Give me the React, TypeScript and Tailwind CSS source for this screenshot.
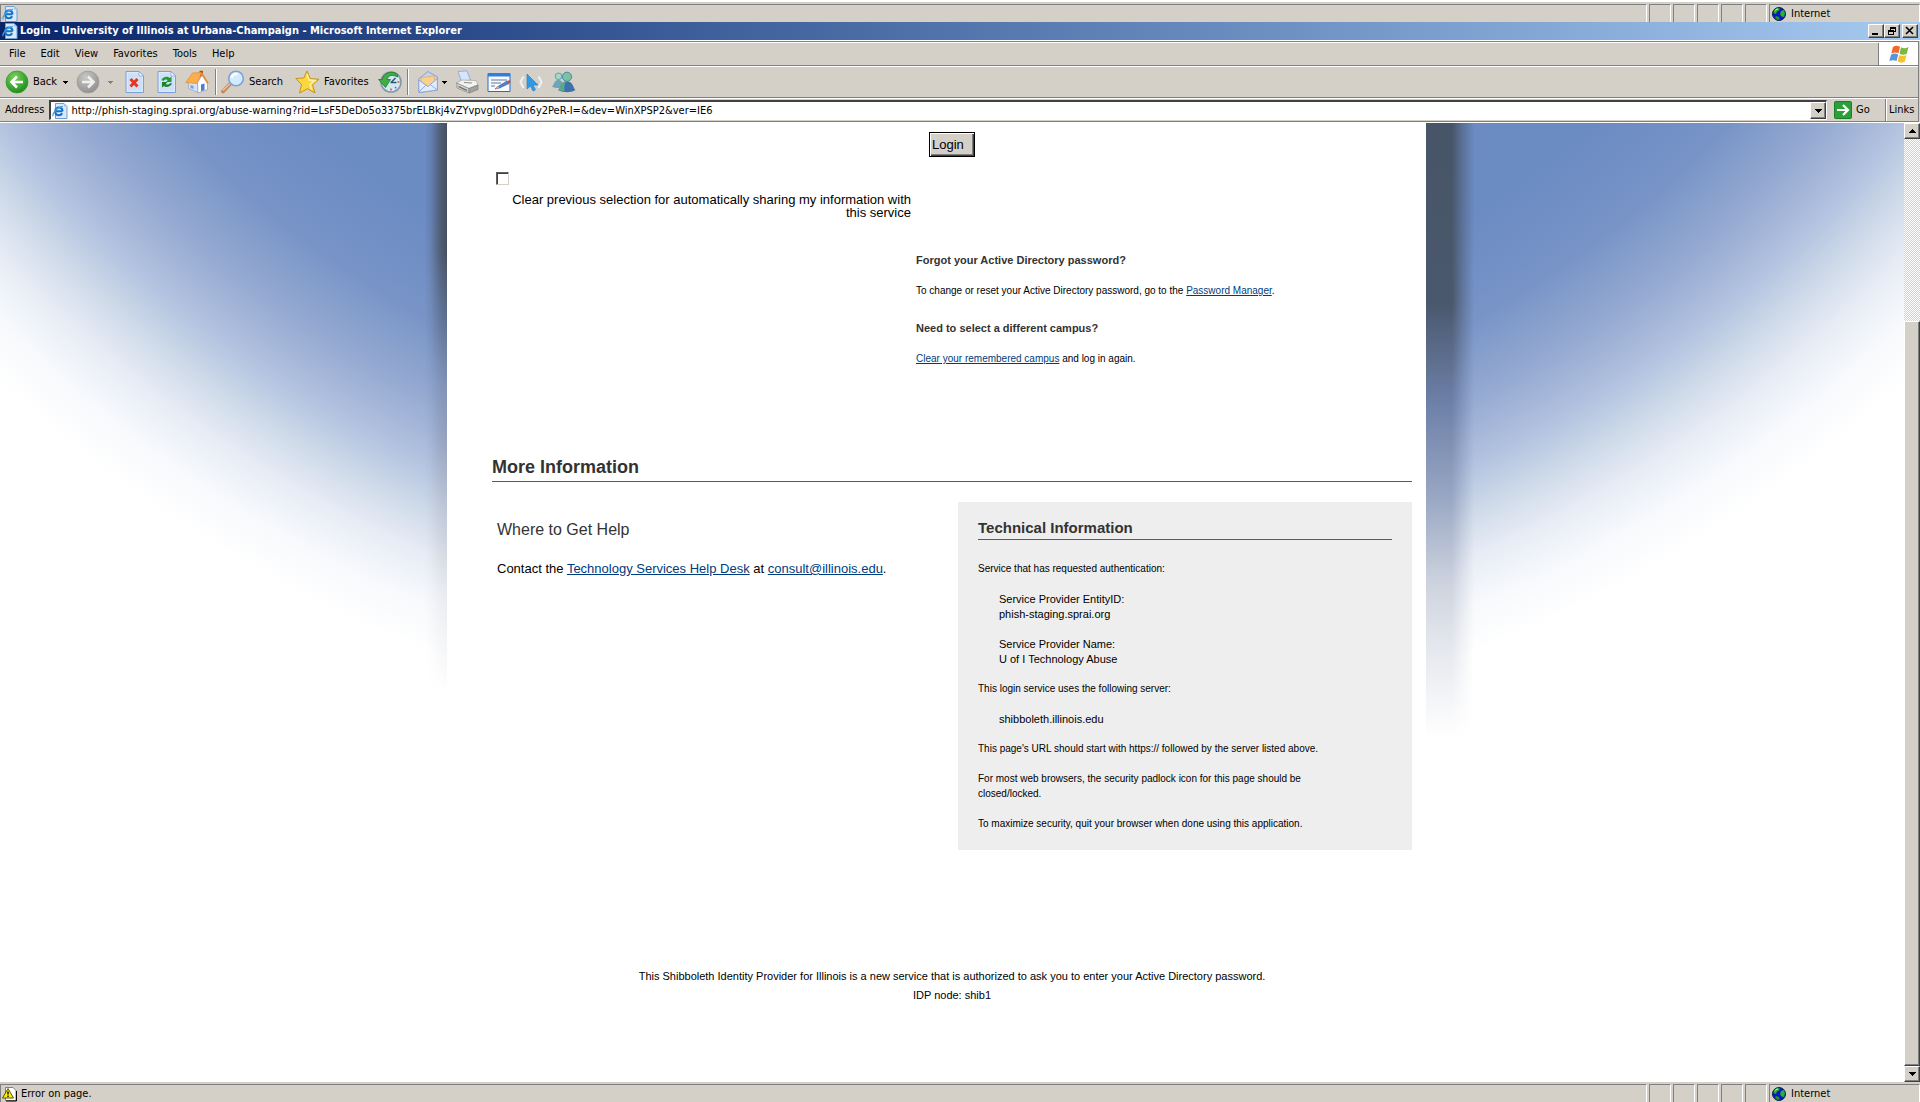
import React from "react";

const raised =
  "border border-t-white border-l-white border-b-[#404040] border-r-[#404040] shadow-[inset_-1px_-1px_0_#808080]";

function IELogo({ className = "w-4 h-4" }: { className?: string }) {
  return (
    <svg viewBox="0 0 16 16" className={className} aria-hidden="true">
      <path d="M3.5 .5h8.500l3 3v12h-11.500z" fill="#d9e9fa" stroke="#6f9fd2" />
      <path d="M12 .5v3h3z" fill="#9fc3e6" />
      <path d="M10.500 8.300H3.300M10.200 10.300c-.8 1.500-1.900 2-3.300 2-2.300 0-3.700-1.700-3.700-3.900s1.500-3.900 3.700-3.900 3.600 1.600 3.600 3.800" fill="none" stroke="#1572c4" strokeWidth="2.100" />
      <path d="M1 13.200C0 10.500 5.500 3.800 10.800 3.300" fill="none" stroke="#3fa3e8" strokeWidth="1.200" />
    </svg>
  );
}

function Globe() {
  return (
    <svg viewBox="0 0 14 14" className="w-[14px] h-[14px] shrink-0" aria-hidden="true">
      <circle cx="7" cy="7" r="6.500" fill="#0c16c8" stroke="#10204a" />
      <path d="M2 3.500 5 1l3 .5-1 2L5 4.500 4 7 1.500 6z" fill="#27b32b" />
      <path d="m9 4 3-1 1 3-1 4-2.500-.5L8 7.500z" fill="#27b32b" />
      <path d="m4 9 3 1 .5 3-2-.3L3 11z" fill="#189a22" />
      <path d="M3 3.500 5 2l1 .5" stroke="#d8f0e0" strokeWidth=".9" fill="none" />
    </svg>
  );
}

function StatusBar({ icon, text }: { icon: React.ReactNode; text: string }) {
  const cell = "h-full border-l border-t border-[#808080] border-r border-r-white";
  return (
    <div className="flex h-5 shrink-0 gap-[2px] bg-[#d4d0c8] pt-[2px]">
      <div className={cell + " flex flex-1 items-center gap-[3px] pl-px"}>
        {icon}
        <span>{text}</span>
      </div>
      {[0, 1, 2, 3, 4].map((i) => (
        <div key={i} className={cell + " w-[22px]"} />
      ))}
      <div className={cell + " flex w-[151px] items-center gap-[5px] pl-[2px]"}>
        <Globe />
        <span>Internet</span>
      </div>
    </div>
  );
}

function Down({ className = "h-[4px] w-[7px]" }: { className?: string }) {
  return (
    <svg viewBox="0 0 7 4" className={className} aria-hidden="true" shapeRendering="crispEdges">
      <path d="M0 0h7L3.500 4z" fill="currentColor" />
    </svg>
  );
}

function TitleButton({ label, children }: { label: string; children: React.ReactNode }) {
  return (
    <button aria-label={label} className={"flex h-[14px] w-4 items-center justify-center bg-[#d4d0c8] " + raised}>
      <svg viewBox="0 0 12 10" className="h-[10px] w-3" fill="none" stroke="#000" shapeRendering="crispEdges">
        {children}
      </svg>
    </button>
  );
}

function RoundArrow({ left }: { left?: boolean }) {
  return (
    <svg viewBox="0 0 24 24" className="h-6 w-6" aria-hidden="true">
      <defs>
        <radialGradient id={left ? "ga" : "gb"} cx=".4" cy=".3" r=".75">
          <stop offset="0" stopColor={left ? "#7fd35c" : "#c9c9c7"} />
          <stop offset="1" stopColor={left ? "#178a17" : "#8d8d8b"} />
        </radialGradient>
      </defs>
      <circle cx="12" cy="12" r="11" fill={left ? "url(#ga)" : "url(#gb)"} stroke={left ? "#3a9a34" : "#9d9d9b"} strokeWidth=".8" />
      <path d={left ? "M18 12H7.500M12 6.500 6.500 12l5.500 5.500" : "M6 12h10.500M12 6.500l5.500 5.500-5.500 5.500"} fill="none" stroke={left ? "#fff" : "#efefed"} strokeWidth="2.600" />
    </svg>
  );
}

function Sheet({ children }: { children: React.ReactNode }) {
  return (
    <svg viewBox="0 0 20 24" className="h-6 w-5" aria-hidden="true">
      <path d="M1 1.500h13l4.500 4.500v16.500H1z" fill="#dbe9fb" stroke="#7f9fd8" />
      <path d="M3 3.500h10v4h4v13H3z" fill="#c3dbf8" opacity=".6" />
      <path d="M14 1.500V6h4.500z" fill="#fff" stroke="#7f9fd8" strokeWidth=".8" />
      {children}
    </svg>
  );
}

const HomeIcon = () => (
  <svg viewBox="0 0 24 24" className="h-6 w-6" aria-hidden="true">
    <path d="M14.500 .8h3.500v6h-3.500z" fill="#b4442a" />
    <path d="M3.500 11v7.500l9.500 4V12L8 7z" fill="#d5e1f4" stroke="#93a4c6" strokeWidth=".7" />
    <path d="M12.500 12.500 17 5l5.500 8v6.500l-9.500 3.500z" fill="#fafcff" stroke="#8799bd" strokeWidth=".7" />
    <path d="M7.500 3 16.500 2.500 12 13.500 .8 12.500z" fill="#f9b04c" stroke="#e68a2c" strokeWidth=".7" />
    <path d="M16.500 3 23 13.500" stroke="#e58f35" strokeWidth="1.800" />
    <path d="M16 14.500l3.500-1v6.500l-3.500 1.200z" fill="#4f7cc4" />
    <path d="M5.500 15l3 1v3l-3-1z" fill="#7ba0d8" />
  </svg>
);

const SearchIcon = () => (
  <svg viewBox="0 0 24 24" className="h-6 w-6" aria-hidden="true">
    <path d="M9 14 2 21.500" stroke="#c98352" strokeWidth="3.600" strokeLinecap="round" />
    <path d="M9 13.500 2 20.500" stroke="#f3c9a4" strokeWidth="1.200" />
    <circle cx="15" cy="8.500" r="7.300" fill="#d3ecfd" stroke="#7fa2dc" strokeWidth="1.600" />
    <path d="M10.500 8a5 5 0 0 1 6-4" stroke="#fff" strokeWidth="2.200" fill="none" />
  </svg>
);

const StarIcon = () => (
  <svg viewBox="0 0 25 24" className="h-6 w-[25px]" aria-hidden="true">
    <path d="m12 1 3.200 7.600 8.800.6-6.500 5.600 2.500 8.200-7.500-4.300L4.500 23l2-8.500L.8 8.500l8-.5z" fill="#fbd63d" stroke="#c8921c" strokeLinejoin="round" />
    <path d="m12 4 2 6 6 .5-5 4 1.500 5" fill="none" stroke="#fff3a6" strokeWidth="1.400" />
  </svg>
);

const HistoryIcon = () => (
  <svg viewBox="0 0 26 24" className="h-6 w-[26px]" aria-hidden="true">
    <circle cx="14" cy="12" r="10" fill="#d3e8f6" stroke="#8397a8" strokeWidth="1.600" />
    <path d="M14 12.500 18.500 8M13.500 12.500h6" stroke="#2d5878" strokeWidth="1.500" />
    <path d="M14 18.500v2M20.500 12h2M18 17l1.200 1.200" stroke="#e0522e" strokeWidth="1.500" />
    <path d="M20.500 4.500C15.500 0 6.500 2.500 5.300 9.500H1.500L8.500 17.500l5-8H10C11 5.500 15.500 4 20.500 7z" fill="#3fae45" stroke="#1c7a26" strokeWidth=".8" />
  </svg>
);

const MailIcon = () => (
  <svg viewBox="0 0 22 24" className="h-6 w-[22px]" aria-hidden="true">
    <path d="M1.500 9 11 1.500 20.500 7v13L2 22.500z" fill="#c0d3f4" stroke="#8aa0d8" />
    <path d="M4 7.500 17 6l1 7-6.500 4L4 14z" fill="#fbd08a" stroke="#e5a74d" strokeWidth=".7" />
    <path d="m1.700 10 9.300 6.500 9.300-8V20L2 22.500z" fill="#e2edfc" stroke="#8aa0d8" strokeWidth=".9" />
    <path d="m2 22 7-7m11.300 5-7-5.500" stroke="#8aa0d8" strokeWidth=".9" />
  </svg>
);

const PrintIcon = () => (
  <svg viewBox="0 0 24 24" className="h-6 w-6" aria-hidden="true">
    <path d="M3 1.500 12 .8l3.500 9-9 2z" fill="#d6e5fb" stroke="#8fa6d8" strokeWidth=".9" />
    <path d="M1.500 13 7 10l14 .5 2 4.500-9 3.500z" fill="#f2f2f0" stroke="#a3a3a0" strokeWidth=".7" />
    <path d="M1.500 13 14 18.500V23L2 18z" fill="#cfcfcc" stroke="#8c8c89" strokeWidth=".7" />
    <path d="M14 18.500 23 15v4.500L14 23z" fill="#a2a2a0" stroke="#7b7b78" strokeWidth=".7" />
    <path d="m3.500 16.500 8.500 4" stroke="#656565" strokeWidth="1.200" />
    <path d="m9 12.500 8 .5" stroke="#8c8c89" />
  </svg>
);

const EditIcon = () => (
  <svg viewBox="0 0 24 24" className="h-6 w-6" aria-hidden="true">
    <path d="M1 3.500h22v18H1z" fill="#f7fbff" stroke="#2a6cc4" />
    <path d="M1 3h22v3.500H1z" fill="#2f7fe0" />
    <path d="M4 10h16M4 13h10M4 16h4" stroke="#66758c" />
    <path d="M11 16.500 20 11l2 2.500-9.500 4.500-4.500 1z" fill="#4c86d8" stroke="#2b4d8d" strokeWidth=".6" />
    <path d="m20 11 3-1 .5 2.500L22 13.500z" fill="#d64b32" />
    <path d="m8 19 3-2.500 1.500 1.500z" fill="#e8b25e" />
  </svg>
);

const PointerIcon = () => (
  <svg viewBox="0 0 24 24" className="h-6 w-6" aria-hidden="true">
    <path d="M4.500 6.500 1.500 12l3 6M19.500 6.500l3 5.500-3 6" fill="none" stroke="#eef2f6" strokeWidth="2" />
    <path d="M8 4v15l3.500-3 2.500 5 2.500-1.200-2.500-4.800H19z" fill="#2f9be8" stroke="#2576c4" strokeWidth=".6" />
  </svg>
);

const PeopleIcon = () => (
  <svg viewBox="0 0 25 24" className="h-6 w-[25px]" aria-hidden="true">
    <path d="M1 16.500c2-1 2-6.500 6-6.500s5 2 5 7c-3 1.500-8 1.500-11-.5z" fill="#6ba7b6" />
    <circle cx="7.500" cy="6.300" r="3.300" fill="#a8d8bd" stroke="#4a90a8" strokeWidth=".8" />
    <path d="M7 20c3-1 2-8.500 9-8.500s6 7.500 8.500 8.500c-5 3-12 3-17.500 0z" fill="#3f70ad" />
    <path d="M7 20c3-1 2-8.500 8-8.500-1.500 3-2 6-1.500 10.300z" fill="#59a886" />
    <circle cx="16" cy="6.800" r="4.600" fill="#79c3a0" stroke="#3f7fae" strokeWidth=".9" />
  </svg>
);

const Flag = () => (
  <svg viewBox="0 0 20 18" className="h-[18px] w-5" aria-hidden="true">
    <path d="M4 2Q7-.3 11 1.800L9.500 8.300Q6 6.500 2.200 8.500z" fill="#ee6a2c" />
    <path d="M12 2.300Q15.500 4.200 19.500 2L17.800 8.800Q14 10.500 10.500 8.800z" fill="#7bb842" />
    <path d="M2 9.700Q5.500 7.700 9.200 9.400L7.600 16Q4 14.500.3 16z" fill="#5b94dc" />
    <path d="M10.200 9.900Q13.600 11.600 17.500 9.900L15.800 16.800Q12.500 18.600 8.600 16.500z" fill="#f8c12e" />
  </svg>
);

function Tool({ label, text, children, className = "" }: { label: string; text?: string; children: React.ReactNode; className?: string }) {
  return (
    <button aria-label={label} className={"flex items-center gap-1 " + className}>
      {children}
      {text && <span>{text}</span>}
    </button>
  );
}

const Separator = () => <div className="h-[26px] w-[2px] border-l border-[#808080] bg-white" />;
const band = "flex items-center border-b border-[#808080] border-t border-t-white";

function Chrome() {
  return (
    <header className="shrink-0">
      <div className="h-[2px] bg-white" />
      <StatusBar icon={<IELogo />} text="" />
      <div className="flex h-[18px] items-center justify-between bg-linear-to-r from-[#0a246a] to-[#a6caf0] pr-[2px] pl-[2px] text-white">
        <div className="flex items-center gap-[2px]">
          <IELogo />
          <h1 className="font-bold">Login - University of Illinois at Urbana-Champaign - Microsoft Internet Explorer</h1>
        </div>
        <div className="flex">
          <TitleButton label="Minimize"><path d="M2 8h6" strokeWidth="2" /></TitleButton>
          <TitleButton label="Restore"><path d="M4.500 4V1.500h5v4H8M4 2h6M2.500 4.500h5v4h-5zM2 5h6" /></TitleButton>
          <div className="w-[2px]" />
          <TitleButton label="Close"><path d="m2 1 7 7M9 1 2 8" strokeWidth="1.600" shapeRendering="auto" /></TitleButton>
        </div>
      </div>
      <div className="border-t border-white bg-[#d4d0c8] pr-px">
        <div className="border-t border-r border-[#808080]">
          <nav className="flex h-6 items-stretch border-t border-b border-t-white border-b-[#808080]">
            <div className="flex flex-1 items-center gap-[15px] pl-[9px]">
              {["File", "Edit", "View", "Favorites", "Tools", "Help"].map((m) => (
                <button key={m}>{m}</button>
              ))}
            </div>
            <div className="flex w-10 items-center justify-center border-l border-[#808080] bg-white"><Flag /></div>
          </nav>
          <div className={band + " h-8 pl-[5px]"}>
            <Tool label="Back" text="Back"><RoundArrow left /></Tool>
            <Down className="ml-[6px] h-[3px] w-[5px]" />
            <Tool label="Forward" className="ml-2"><RoundArrow /></Tool>
            <Down className="ml-2 h-[3px] w-[5px] text-[#808080]" />
            <Tool label="Stop" className="ml-3">
              <Sheet><path d="m5.500 9 7 7.500M12.500 9l-7 7.500" stroke="#e8361a" strokeWidth="3" /></Sheet>
            </Tool>
            <Tool label="Refresh" className="ml-3">
              <Sheet>
                <path d="M4.500 10C6 6.500 11 6 12.500 8l2-1.500V12H9l1.800-2C9.500 8.800 7 9.500 6.500 11z" fill="#219a2e" />
                <path d="M15 13.500c-1.500 3.500-6 4.500-8 2.500l-2 1.500V12h5.500l-1.800 2c1.300 1.200 3.800.5 4.300-1z" fill="#178523" />
              </Sheet>
            </Tool>
            <Tool label="Home" className="ml-2"><HomeIcon /></Tool>
            <div className="w-[6px]" />
            <Separator />
            <Tool label="Search" text="Search" className="ml-1"><SearchIcon /></Tool>
            <Tool label="Favorites" text="Favorites" className="ml-3"><StarIcon /></Tool>
            <Tool label="History" className="ml-2"><HistoryIcon /></Tool>
            <div className="w-1" />
            <Separator />
            <Tool label="Mail" className="ml-2"><MailIcon /></Tool>
            <Down className="ml-[3px] h-[3px] w-[5px]" />
            <Tool label="Print" className="ml-2"><PrintIcon /></Tool>
            <Tool label="Edit page" className="ml-2"><EditIcon /></Tool>
            <Tool label="Select" className="ml-2"><PointerIcon /></Tool>
            <Tool label="Messenger" className="ml-2"><PeopleIcon /></Tool>
          </div>
          <div className={band + " h-6 pl-[5px]"}>
            <label htmlFor="address">Address</label>
            <div className="ml-[5px] flex h-5 flex-1 items-center border-t-2 border-r border-b border-l-2 border-t-[#404040] border-r-white border-b-white border-l-[#404040] bg-white pl-px">
              <IELogo />
              <input id="address" readOnly className="ml-[3px] min-w-0 flex-1 bg-transparent outline-none" value="http://phish-staging.sprai.org/abuse-warning?rid=LsF5DeDo5o3375brELBkj4vZYvpvgl0DDdh6y2PeR-I=&dev=WinXPSP2&ver=IE6" />
              <button aria-label="Show addresses" className={"flex h-[17px] w-4 items-center justify-center bg-[#d4d0c8] " + raised}><Down /></button>
            </div>
            <button className="ml-[7px] flex w-[51px] items-center gap-1">
              <svg viewBox="0 0 18 18" className="h-[18px] w-[18px]" aria-hidden="true">
                <rect x=".5" y=".5" width="17" height="17" rx="1" fill="#2b9f38" stroke="#1a7f28" />
                <path d="M3 9h11M9 4l5 5-5 5" fill="none" stroke="#fff" strokeWidth="2.200" />
              </svg>
              Go
            </button>
            <div className="flex h-full w-[33px] items-center border-l border-[#808080] pl-[3px] shadow-[inset_1px_0_0_#fff]">Links</div>
          </div>
        </div>
      </div>
      <div className="h-px bg-white" />
    </header>
  );
}

function Link({ children }: { children: React.ReactNode }) {
  return <a href="#" className="text-[#003c7d] underline">{children}</a>;
}

export default function App() {
  return (
    <div className="flex h-screen flex-col overflow-hidden bg-white font-['DejaVu_Sans_Condensed','DejaVu_Sans',sans-serif] text-[11px] leading-[14px] text-black">
      <Chrome />
      <div className="flex min-h-0 flex-1">
        <main className="flex min-w-0 flex-1 justify-center bg-[radial-gradient(ellipse_1365px_1302px_at_50%_-673px,#6b8ac2_0,#6b8bc3_70%,#7894c7_77%,#97abd2_82.5%,#b1c1df_86.500%,#cedae9_90%,#e6ebf5_93%,#f7f9fc_96.500%,#fff_100%)] font-['Liberation_Sans',Arial,sans-serif]">
          <div className="w-[22px] bg-[linear-gradient(to_bottom,#47505f_0,#47505f_130px,#5f7190_200px,#7f90b5_260px,#96a3bf_320px,#c0c8d6_390px,#e8eaee_470px,#fff_570px)] [mask-image:linear-gradient(to_right,transparent,rgb(0_0_0/.2)_6px,rgb(0_0_0/.8)_16px,#000)]" />
          <div className="w-[979px] bg-white pr-[14px] pl-[45px]">
            <form className="pt-[9px]">
              <div className="flex pl-[437px]">
                <button type="button" className="h-[25px] w-[46px] border border-black bg-[#d4d0c8] pl-[2px] text-left text-[13px] shadow-[inset_1px_1px_0_#fff,inset_-1px_-1px_0_#404040,inset_-2px_-2px_0_#808080]">Login</button>
              </div>
              <div className="mt-[15px] w-[419px] pl-1">
                <input id="clear" type="checkbox" className="block h-[13px] w-[13px] appearance-none border border-t-[#606060] border-r-[#d4d0c8] border-b-[#d4d0c8] border-l-[#606060] bg-white shadow-[inset_1px_1px_0_#404040]" />
                <label htmlFor="clear" className="mt-2 block text-right text-[13px] leading-[13px]">Clear previous selection for automatically sharing my information with this service</label>
              </div>
            </form>
            <section className="mt-[34px] pl-[424px] text-[10px]">
              <h2 className="text-[11px] font-bold text-[#333]">Forgot your Active Directory password?</h2>
              <p className="mt-[17px]">To change or reset your Active Directory password, go to the <Link>Password Manager</Link>.</p>
              <h2 className="mt-[23px] text-[11px] font-bold text-[#333]">Need to select a different campus?</h2>
              <p className="mt-[17px]"><Link>Clear your remembered campus</Link> and log in again.</p>
            </section>
            <h2 className="mt-[89px] border-b border-[#4a55a0] pb-[2px] text-[18px] leading-[24px] font-bold text-[#333]">More Information</h2>
            <div className="mt-5 flex justify-between">
              <section className="pt-[18px] pl-[5px]">
                <h3 className="text-[16px] leading-5 text-[#333]">Where to Get Help</h3>
                <p className="mt-[21px] text-[13px] leading-4">Contact the <Link>Technology Services Help Desk</Link> at <Link>consult@illinois.edu</Link>.</p>
              </section>
              <section className="w-[454px] bg-[#eee] px-5 pt-[18px] pb-[19px] text-[10px] leading-[15px]">
                <h3 className="border-b border-[#4a55a0] pb-[3px] text-[15px] leading-4 font-bold text-[#333]">Technical Information</h3>
                <p className="mt-[21px]">Service that has requested authentication:</p>
                <dl className="mt-4 pl-[21px] text-[11px]">
                  <dt>Service Provider EntityID:</dt>
                  <dd>phish-staging.sprai.org</dd>
                  <dt className="mt-[15px]">Service Provider Name:</dt>
                  <dd>U of I Technology Abuse</dd>
                </dl>
                <p className="mt-[14px]">This login service uses the following server:</p>
                <p className="mt-4 pl-[21px] text-[11px]">shibboleth.illinois.edu</p>
                <p className="mt-[14px]">This page's URL should start with https:// followed by the server listed above.</p>
                <p className="mt-[15px] pr-[60px]">For most web browsers, the security padlock icon for this page should be closed/locked.</p>
                <p className="mt-[15px]">To maximize security, quit your browser when done using this application.</p>
              </section>
            </div>
            <footer className="mt-[117px] text-center text-[11px] leading-[19px]">
              <p>This Shibboleth Identity Provider for Illinois is a new service that is authorized to ask you to enter your Active Directory password.</p>
              <p>IDP node: shib1</p>
            </footer>
          </div>
          <div className="w-[53px] bg-[linear-gradient(to_bottom,#485568_0,#4a586d_180px,#6d80a8_280px,#97a5c2_370px,#cdd3de_460px,#e3e6ec_520px,#fff_615px)] [mask-image:linear-gradient(to_right,#000_0,#000_26px,rgb(0_0_0/.5)_36px,transparent_48px)]" />
        </main>
        <div className="flex w-4 flex-col bg-[repeating-conic-gradient(#fff_0_25%,#d4d0c8_0_50%)] bg-[length:2px_2px]">
          <button aria-label="Scroll up" className={"flex h-4 items-center justify-center bg-[#d4d0c8] " + raised}><Down className="h-[4px] w-[7px] rotate-180" /></button>
          <div className="h-[182px]" />
          <div className={"flex-1 bg-[#d4d0c8] " + raised} />
          <button aria-label="Scroll down" className={"flex h-4 items-center justify-center bg-[#d4d0c8] " + raised}><Down /></button>
        </div>
      </div>
      <StatusBar
        icon={
          <svg viewBox="0 0 16 16" className="h-4 w-4" aria-hidden="true">
            <path d="M3.500 1.500h7.500l3 3v10H3.500z" fill="#fff" stroke="#808080" />
            <path d="M14.500 5v10H4" stroke="#000" fill="none" />
            <path d="M6 2.500 11.500 12h-11z" fill="#ffee00" stroke="#5a5400" strokeLinejoin="round" />
            <path d="M6 5.500v3M6 9.500v1.500" stroke="#000" strokeWidth="1.400" />
          </svg>
        }
        text="Error on page."
      />
    </div>
  );
}
